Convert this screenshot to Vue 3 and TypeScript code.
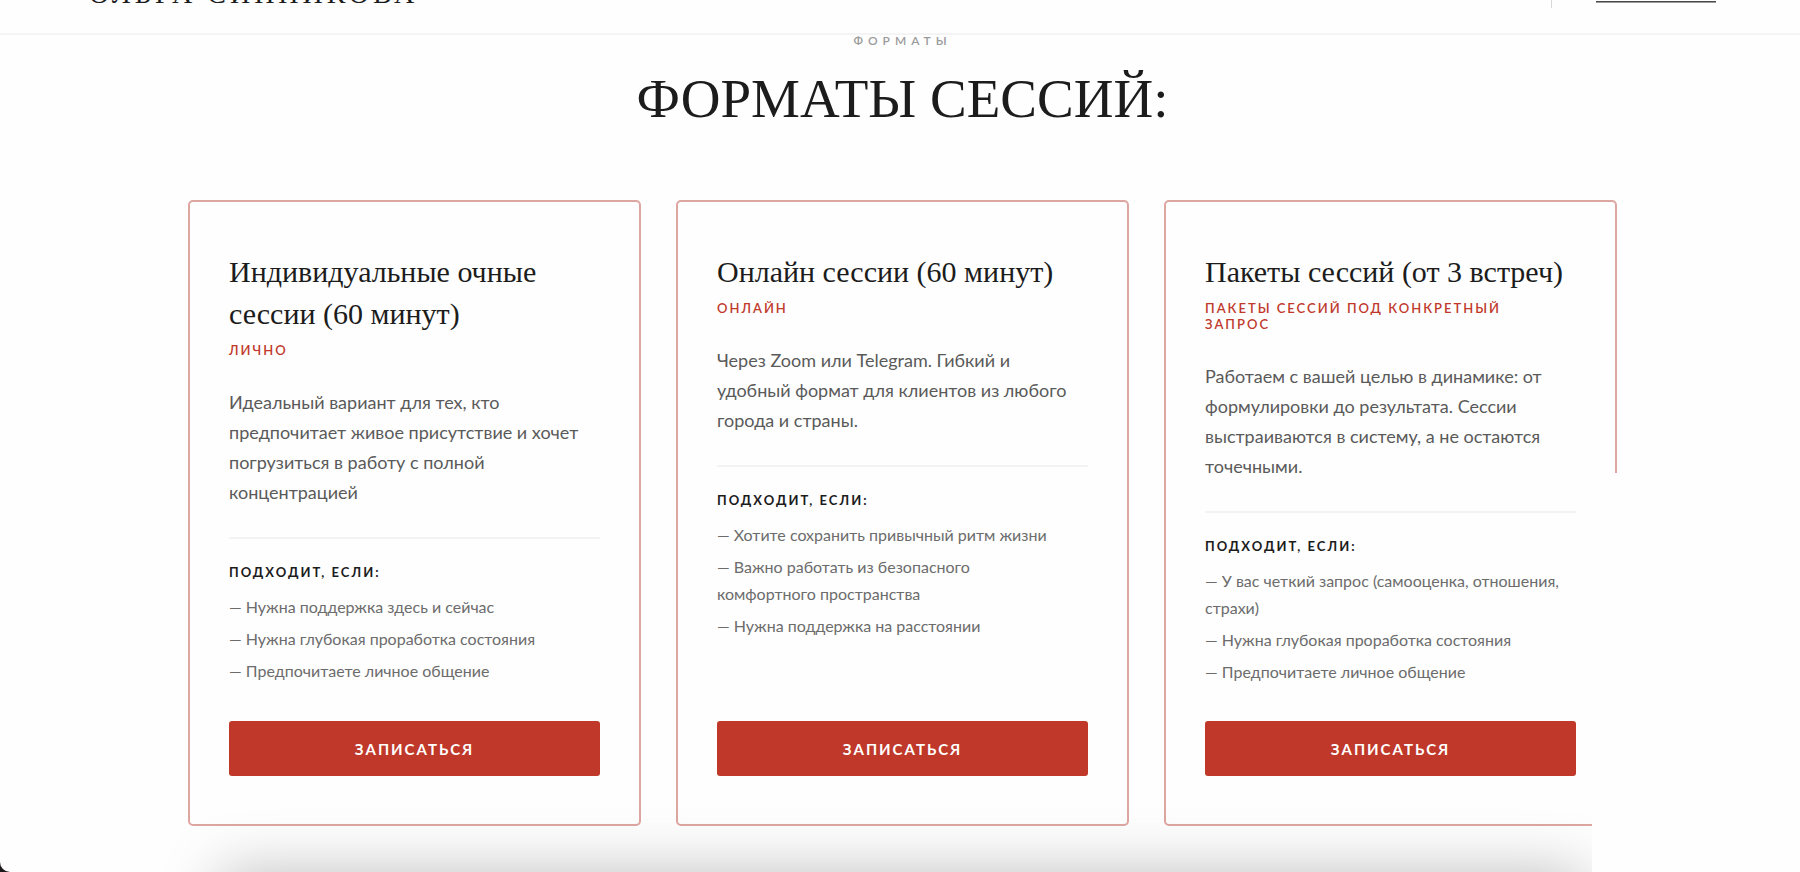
<script setup lang="ts">
interface SessionFormat {
  title: string
  mode: string
  description: string
  reasons: string[]
}

const formats: SessionFormat[] = [
  {
    title: 'Индивидуальные очные сессии (60 минут)',
    mode: 'ЛИЧНО',
    description:
      'Идеальный вариант для тех, кто предпочитает живое присутствие и хочет погрузиться в работу с полной концентрацией',
    reasons: [
      'Нужна поддержка здесь и сейчас',
      'Нужна глубокая проработка состояния',
      'Предпочитаете личное общение',
    ],
  },
  {
    title: 'Онлайн сессии (60 минут)',
    mode: 'ОНЛАЙН',
    description:
      'Через Zoom или Telegram. Гибкий и удобный формат для клиентов из любого города и страны.',
    reasons: [
      'Хотите сохранить привычный ритм жизни',
      'Важно работать из безопасного комфортного\u00a0пространства',
      'Нужна поддержка на расстоянии',
    ],
  },
  {
    title: 'Пакеты сессий (от 3 встреч)',
    mode: 'ПАКЕТЫ СЕССИЙ ПОД КОНКРЕТНЫЙ ЗАПРОС',
    description:
      'Работаем с вашей целью в динамике: от формулировки до результата. Сессии выстраиваются в систему, а не остаются точечными.',
    reasons: [
      'У вас четкий запрос (самооценка, отношения, страхи)',
      'Нужна глубокая проработка состояния',
      'Предпочитаете личное общение',
    ],
  },
]
</script>

<template>
  <div class="page">
    <header class="topbar">
      <a class="brand" href="#">ОЛЬГА СИННИКОВА</a>
      <div class="tools">
        <span class="divider"></span>
        <span class="underline"></span>
      </div>
    </header>

    <main class="formats">
      <p class="eyebrow">ФОРМАТЫ</p>
      <h1 class="heading">ФОРМАТЫ СЕССИЙ:</h1>

      <div class="cards">
        <article v-for="format in formats" :key="format.title" class="card">
          <h2 class="title">{{ format.title }}</h2>
          <p class="mode">{{ format.mode }}</p>
          <p class="description">{{ format.description }}</p>
          <div class="fit">
            <h3 class="fit-label">ПОДХОДИТ, ЕСЛИ:</h3>
            <ul class="reasons">
              <li v-for="reason in format.reasons" :key="reason">— {{ reason }}</li>
            </ul>
          </div>
          <button class="book" type="button">ЗАПИСАТЬСЯ</button>
        </article>
      </div>
    </main>

    <div class="sheet-shadow"></div>
    <div class="side-panel"></div>
  </div>
</template>

<style>
html {
  background: #1c1a1a;
}
</style>

<style scoped>
.page {
  position: relative;
  box-sizing: border-box;
  height: 100vh;
  overflow: hidden;
  background: #fefefe;
  border-bottom-left-radius: 10px;
  color: #1c1c1c;
  font-family: Lato, "Open Sans", sans-serif;
}

.topbar {
  box-sizing: border-box;
  height: 35px;
  padding: 0 84px 0 89px;
  display: flex;
  justify-content: space-between;
  align-items: flex-start;
  overflow: hidden;
  border-bottom: 2px solid #f4f4f4;
}

.brand {
  margin-top: -22px;
  color: #1c1c1c;
  font-family: "Liberation Serif", serif;
  font-size: 28px;
  line-height: 32px;
  letter-spacing: 4px;
  text-decoration: none;
}

.tools {
  display: flex;
  gap: 44px;
}

.divider {
  width: 1px;
  height: 8px;
  background: #d9d9d9;
}

.underline {
  width: 120px;
  height: 1px;
  margin-top: 1px;
  background: #4a4a4a;
  border-bottom: 1px solid #9a9a9a;
}

.formats {
  padding: 0 183px 0 188px;
}

.eyebrow {
  margin: 0;
  color: #9b9b9b;
  font-size: 12px;
  font-weight: 600;
  line-height: 12px;
  letter-spacing: 5px;
  text-align: center;
}

.heading {
  margin: 20px 0 0;
  font-family: "Liberation Serif", serif;
  font-size: 55px;
  font-weight: 400;
  line-height: 64px;
  text-align: center;
}

.cards {
  margin-top: 69px;
  display: grid;
  grid-template-columns: repeat(3, minmax(0, 1fr));
  gap: 35px;
}

.card {
  box-sizing: border-box;
  padding: 49px 39px 48px;
  display: flex;
  flex-direction: column;
  border: 2px solid #dea6a1;
  border-radius: 5px;
}

.title {
  margin: 0;
  font-family: "Liberation Serif", serif;
  font-size: 30px;
  font-weight: 400;
  line-height: 42px;
}

.mode {
  margin: 7px 0 29px;
  padding-right: 20px;
  color: #c0392b;
  font-size: 13px;
  font-weight: 600;
  line-height: 16px;
  letter-spacing: 2px;
}

.description {
  margin: 0 0 30px;
  color: #5a5a5a;
  font-size: 18px;
  line-height: 30px;
}

.fit {
  padding-top: 25px;
  border-top: 2px solid #f3f3f3;
}

.fit-label {
  margin: 0 0 13px;
  font-size: 13px;
  font-weight: 700;
  line-height: 16px;
  letter-spacing: 2px;
}

.reasons {
  margin: 0 0 36px;
  padding: 0;
  display: grid;
  gap: 5px;
  color: #6c6c6c;
  font-size: 16px;
  line-height: 27px;
  list-style: none;
}

.book {
  height: 55px;
  margin-top: auto;
  padding: 0;
  border: 0;
  border-radius: 3px;
  background: #bf3829;
  color: #fff;
  font: 700 15px/20px Lato, "Open Sans", sans-serif;
  letter-spacing: 2px;
}

.sheet-shadow {
  position: absolute;
  top: 100%;
  left: 220px;
  right: 216px;
  height: 80px;
  box-shadow: 0 0 60px rgba(0, 0, 0, 0.25);
}

.side-panel {
  position: absolute;
  top: 473px;
  right: 0;
  bottom: 0;
  width: 208px;
  background: #fefefe;
}
</style>
